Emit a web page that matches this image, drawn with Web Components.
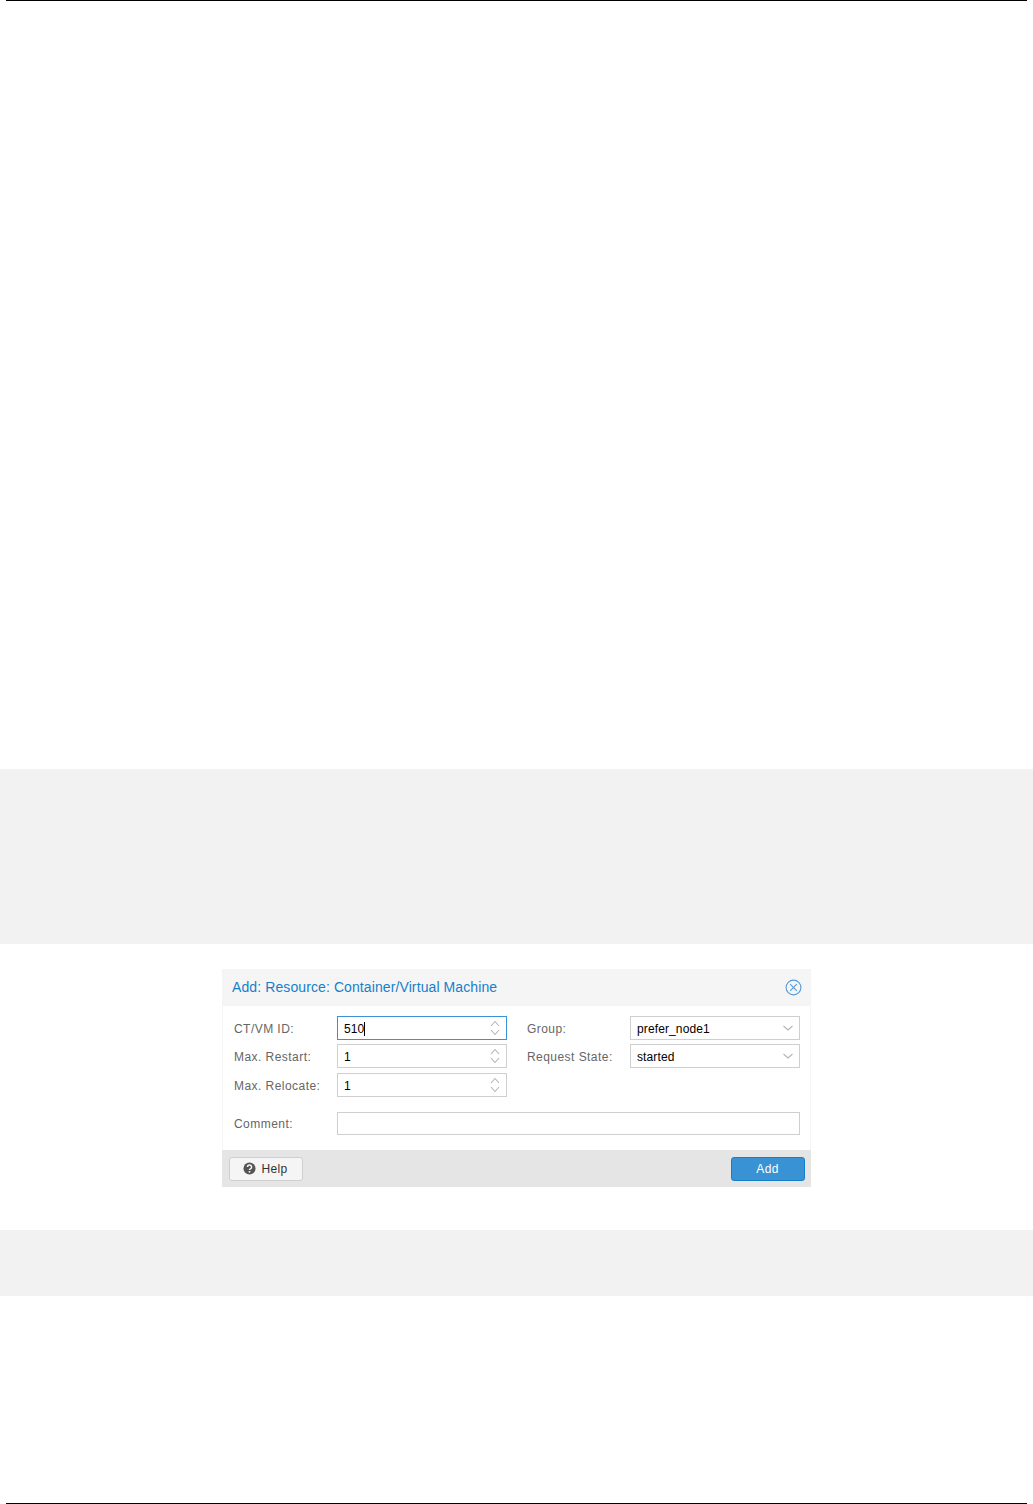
<!DOCTYPE html>
<html>
<head>
<meta charset="utf-8">
<title>Add Resource</title>
<style>
  html, body { margin: 0; padding: 0; background: #fff; }
  body { font-family: "Liberation Sans", Arial, sans-serif; }
</style>
</head>
<body>
<doc-page>
  <gray-band style="--band-height: 175px; --band-top: 769px"></gray-band>
  <pve-dialog title-text="Add: Resource: Container/Virtual Machine">
    <pve-field label="CT/VM ID:" value="510" kind="spin" focused></pve-field>
    <pve-field label="Group:" value="prefer_node1" kind="combo"></pve-field>
    <pve-field label="Max. Restart:" value="1" kind="spin"></pve-field>
    <pve-field label="Request State:" value="started" kind="combo"></pve-field>
    <pve-field label="Max. Relocate:" value="1" kind="spin"></pve-field>
    <pve-field slot="wide" label="Comment:" value="" style="--box-height: 23px"></pve-field>
  </pve-dialog>
  <gray-band style="--band-height: 66px; --band-top: 44px"></gray-band>
</doc-page>
<script>
// Page frame with rule at top and bottom
class DocPage extends HTMLElement {
  constructor() {
    super();
    this.attachShadow({ mode: 'open' });
    this.shadowRoot.innerHTML = `
      <style>
        :host {
          display: flex;
          flex-direction: column;
          box-sizing: border-box;
          height: 1504px;
          overflow: hidden;
        }
        .rule { height: 1px; margin: 0 6px; background: #000; flex: none; }
        .content { flex: 1; display: flex; flex-direction: column; }
      </style>
      <div class="rule"></div>
      <div class="content"><slot></slot></div>
      <div class="rule"></div>
    `;
  }
}

// Gray code block, empty in this page
class GrayBand extends HTMLElement {
  constructor() {
    super();
    this.attachShadow({ mode: 'open' });
    this.shadowRoot.innerHTML = `
      <style>
        :host {
          display: block;
          flex: none;
          height: var(--band-height);
          margin-top: calc(var(--band-top) - 1px);
          background: #f2f2f2;
        }
      </style>
    `;
  }
}
customElements.define('gray-band', GrayBand);

class PveField extends HTMLElement {
  constructor() {
    super();
    this.attachShadow({ mode: 'open' });
  }

  connectedCallback() {
    const kind = this.getAttribute('kind');
    const focused = this.hasAttribute('focused');
    let trigger = '';
    if (kind === 'spin') {
      trigger = `<svg class="trigger" width="12" height="18" viewBox="0 0 12 18" fill="none" stroke="#b5b5b5" stroke-width="1.1">
        <path d="M2 7 L6 2.5 L10 7"/><path d="M2 11 L6 15.5 L10 11"/></svg>`;
    } else if (kind === 'combo') {
      trigger = `<svg class="trigger" width="12" height="18" viewBox="0 0 12 18" fill="none" stroke="#b5b5b5" stroke-width="1.1">
        <path d="M1.5 7 L6 11 L10.5 7"/></svg>`;
    }
    this.shadowRoot.innerHTML = `
      <style>
        :host { display: grid; grid-template-columns: 103px 1fr; align-items: center; }
        .label { font-size: 12px; letter-spacing: 0.45px; color: #666; white-space: nowrap; padding-top: 2px; }
        .box {
          box-sizing: border-box;
          height: var(--box-height, 24px);
          display: flex;
          align-items: center;
          justify-content: space-between;
          padding: 0 5px 0 6px;
          border: 1px solid #cfcfcf;
          background: #fff;
          font-size: 12px;
          letter-spacing: 0.12px;
          color: #000;
        }
        .box.focused { border-color: #3892d4; }
        .value { padding-top: 2px; }
        .caret { display: inline-block; width: 1px; height: 14px; background: #000; vertical-align: -3px; }
        .trigger { flex: none; }
      </style>
      <span class="label">${this.getAttribute('label')}</span>
      <div class="box${focused ? ' focused' : ''}">
        <span class="value">${this.getAttribute('value')}${focused ? '<span class="caret"></span>' : ''}</span>
        ${trigger}
      </div>
    `;
  }
}
customElements.define('pve-field', PveField);

class PveButton extends HTMLElement {
  constructor() {
    super();
    this.attachShadow({ mode: 'open' });
    this.shadowRoot.innerHTML = `
      <style>
        :host {
          display: inline-flex;
          box-sizing: border-box;
          width: 74px;
          height: 24px;
          align-items: center;
          justify-content: center;
          gap: 6px;
          padding-right: 2px;
          border: 1px solid #cfcfcf;
          border-radius: 3px;
          background: #f5f5f5;
          color: #333;
          font-size: 12px;
          letter-spacing: 0.3px;
        }
        :host([primary]) { padding-right: 1px; background: #3892d4; border-color: #157fcc; color: #fff; }
      </style>
      <slot name="icon"></slot>
      <slot></slot>
    `;
  }
}
customElements.define('pve-button', PveButton);

class PveDialog extends HTMLElement {
  constructor() {
    super();
    this.attachShadow({ mode: 'open' });
  }

  connectedCallback() {
    this.shadowRoot.innerHTML = `
      <style>
        :host {
          display: block;
          flex: none;
          box-sizing: border-box;
          width: 589px;
          margin: 25px 0 0 222px;
          height: 218px;
        }
        .frame { height: 100%; display: flex; flex-direction: column; }
        header {
          height: 37px;
          flex: none;
          display: flex;
          align-items: center;
          justify-content: space-between;
          padding: 0 9px 0 10px;
          background: #f5f5f5;
          color: #157fcc;
          font-size: 14px;
          letter-spacing: 0.1px;
        }
        header span { padding-bottom: 2px; }
        main {
          flex: 1;
          padding: 9.9px 10px 0 11px;
          border: solid #f5f5f5;
          border-width: 0 1px;
        }
        .grid {
          display: grid;
          grid-template-columns: 273px 273px;
          column-gap: 20px;
          row-gap: 4.5px;
        }
        .wide { margin-top: 15px; width: 566px; }
        footer {
          height: 37px;
          flex: none;
          box-sizing: border-box;
          display: flex;
          align-items: center;
          justify-content: space-between;
          padding: 0 6px 0 7px;
          background: #e5e5e5;
        }
      </style>
      <div class="frame">
        <header>
          <span>${this.getAttribute('title-text')}</span>
          <svg width="17" height="17" viewBox="0 0 17 17" fill="none" stroke="#5a9bd5" stroke-width="1.1">
            <circle cx="8.5" cy="8.5" r="7.4"/><path d="M5.2 5.2 L11.8 11.8 M11.8 5.2 L5.2 11.8"/>
          </svg>
        </header>
        <main>
          <div class="grid"><slot></slot></div>
          <div class="wide"><slot name="wide"></slot></div>
        </main>
        <footer>
          <pve-button>
            <svg slot="icon" width="13" height="13" viewBox="0 0 13 13">
              <circle cx="6.5" cy="6.5" r="6" fill="#555"/>
              <path d="M4.4 5 A2.1 2 0 1 1 7.4 6.8 Q6.5 7.3 6.5 8" fill="none" stroke="#f5f5f5" stroke-width="1.5"/>
              <rect x="5.7" y="9" width="1.6" height="1.6" fill="#f5f5f5"/>
            </svg>
            Help
          </pve-button>
          <pve-button primary>Add</pve-button>
        </footer>
      </div>
    `;
  }
}
customElements.define('pve-dialog', PveDialog);
customElements.define('doc-page', DocPage);
</script>
</body>
</html>
